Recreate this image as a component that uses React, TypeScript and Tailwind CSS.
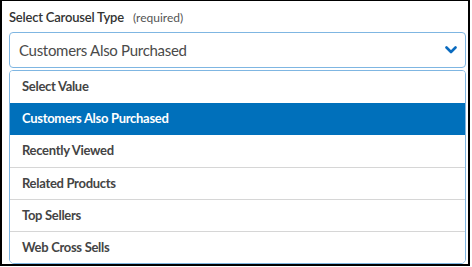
import { useState } from 'react';

const OPTIONS = [
    'Select Value',
    'Customers Also Purchased',
    'Recently Viewed',
    'Related Products',
    'Top Sellers',
    'Web Cross Sells',
];

export default function App() {
    const [selected] = useState('Customers Also Purchased');

    return (
        <div className="w-[470px] h-[266px] border-2 border-t border-black bg-white font-['Lato',sans-serif]">
            <div className="pl-[7px] pr-[2px] pt-[9px]">
                {/* Label */}
                <div className="flex items-baseline gap-[9px] h-[22px] leading-[14px]">
                    <span className="text-[13px] font-semibold text-[#333] tracking-[-0.2px]">Select Carousel Type</span>
                    <span className="text-[12px] text-[#555]">(required)</span>
                </div>

                {/* Select box */}
                <div className="flex items-center justify-between h-[36px] border border-[#7fb6e2] rounded-[4px] pl-[9px] pr-[8px]">
                    <span className="text-[15px] text-[#4a4a4a] tracking-[-0.3px]">{selected}</span>
                    <svg width="12" height="8" viewBox="0 0 12 8">
                        <path d="M1.5 1.5 L6 6 L10.5 1.5" fill="none" stroke="#0a6bbf" strokeWidth="2.6" strokeLinecap="round" strokeLinejoin="round" />
                    </svg>
                </div>

                {/* Options list */}
                <div className="mt-[2px] border border-[#7fb6e2] rounded-b-[5px] rounded-t-[4px] overflow-hidden">
                    {OPTIONS.map((opt, i) => (
                        <div
                            key={opt}
                            className={`h-[32px] flex items-center pl-[12px] text-[13px] font-bold tracking-[-0.3px] ${
                                opt === selected ? 'bg-[#0070bb] text-white' : 'bg-white text-[#444]'
                            } ${i > 0 && opt !== selected && OPTIONS[i - 1] !== selected ? 'border-t border-[#d6d6d6]' : ''}`}
                        >
                            {opt}
                        </div>
                    ))}
                </div>
            </div>
        </div>
    );
}
